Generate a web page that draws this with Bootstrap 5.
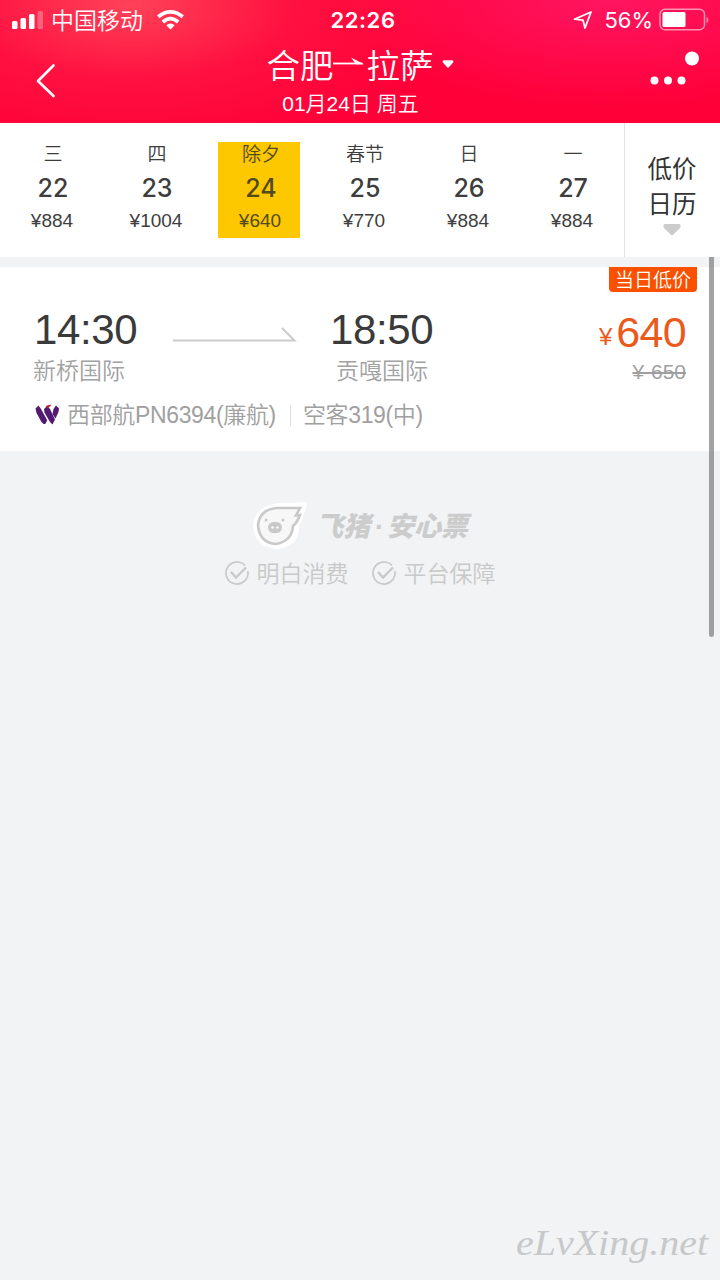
<!DOCTYPE html>
<html lang="zh-CN">
<head>
<meta charset="utf-8">
<meta name="viewport" content="width=device-width, initial-scale=1">
<title>合肥→拉萨</title>
<link href="https://cdn.jsdelivr.net/npm/bootstrap@5.3.0/dist/css/bootstrap.min.css" rel="stylesheet">
<style>
body{font-family:"Liberation Sans","Noto Sans CJK SC",sans-serif;background:#f1f3f5;color:#3d3d3d;height:1280px;overflow:hidden}
svg{display:block;flex:none;overflow:visible}
.cjk{font-family:"Noto Sans CJK SC",sans-serif;font-weight:350}
.sf{font-family:Inter,sans-serif}
.top-area{height:123px;color:#fff;background:radial-gradient(ellipse 330px 150px at 130px 5px,rgba(255,80,95,.82),rgba(255,40,75,.4) 50%,transparent),radial-gradient(ellipse 280px 110px at 610px 0,rgba(255,28,110,.75),transparent),#ff0038}
.status{height:40px}
.status>div{flex:1 1 0}
.carrier{font-size:23px;line-height:38px;height:40px;margin:0 14px 0 7px}
.clock{font-size:22px;line-height:40px;font-weight:600;letter-spacing:.6px;margin:0 -7px 0 15px}
.batt{font-size:22px;line-height:40px;margin:0 7px 0 12px}
.titlebar{height:83px}
.side{width:76px;height:83px}
.city{font-size:33.5px;line-height:50px;height:47px}
.subdate{font-size:21px;line-height:33px;height:33px;font-family:"Liberation Sans","Noto Sans CJK SC",sans-serif;font-weight:350;padding-right:19px}
.dates{height:134px;background:#fff}
.day{width:104px;padding-top:19px}
.tile{width:82px;height:96px;margin-left:10px;padding-left:4px}
.tile.on{background:#fdc800;color:#514a1c}
.wk{font-size:19px;line-height:22px;height:30px}
.dn{font-size:25px;line-height:32px;height:32px;font-weight:500}
.pr{font-size:19px;line-height:34px;height:34px;padding-right:2px}
.cal{width:96px;border-left:1px solid #e2e2e2;padding:27px 1px 0 0;font:400 24.5px/35px "Noto Sans CJK SC",sans-serif;color:#333}
.flight{height:184px;margin-top:10px;background:#fff;padding:0 34px 0 33px}
.tag-low{width:88px;height:25px;margin-right:-11px;border-radius:0 0 4px 4px;background:#fa5000;color:#fff;font-size:19px;line-height:24px}
.schedule{height:105px;padding-top:13px}
.leg-from{width:140px}
.leg-to{margin-left:33px}
.time{font-size:42px;line-height:50px;height:48px;letter-spacing:-.4px;color:#3a3a3a}
.leg-from .time{padding-left:1px}
.port{font-size:23px;line-height:33px;height:34px;color:#a2a2a2}
.leg-to .port{padding-left:6px}
.price{font-size:43px;line-height:50px;height:50px;color:#e95a1c;letter-spacing:-.7px;padding-top:2px}
.yen{font-size:24px;margin-right:4px;letter-spacing:0;vertical-align:2px;line-height:1}
.was{font-size:21px;line-height:34px;height:28px;color:#9f9f9f;word-spacing:1px}
.info{font-size:23px;line-height:36px;height:36px;color:#a0a0a0;letter-spacing:-.35px;font-weight:350}
.sep{width:1px;height:21px;background:#ddd;margin:0 12px 0 14px}
.brand{color:#ccc;font:italic 900 27px/44px "Noto Sans CJK SC",sans-serif;padding-top:2px}
.dot{font-family:"Liberation Sans",sans-serif;padding:0 4px}
.pledge{font-size:23px;line-height:38px;height:44px;color:#c9c9c9}
.pledge span{margin-bottom:2px}
.pledge-gap{margin-right:23px}
.scrollbar-thumb{right:6px;top:257px;width:5px;height:380px;border-radius:0 0 3px 3px;background:rgba(120,120,120,.68)}
.site-mark{right:9px;bottom:10px;color:#c6c8c9}
</style>
</head>
<body class="position-relative">
<header class="top-area">
  <div class="status d-flex align-items-center">
    <div class="d-flex align-items-center">
      <svg width="36" height="18" class="ms-2 ps-1" viewBox="0 0 32 18"><g fill="#fff"><rect x="0" y="10" width="5.500" height="8" rx="1.500"/><rect x="8.500" y="7" width="5.500" height="11" rx="1.500"/><rect x="17" y="3" width="5.500" height="15" rx="1.500"/><rect x="25.500" y="0" width="5.500" height="18" rx="1.500" opacity=".28"/></g></svg>
      <span class="carrier cjk">中国移动</span>
      <svg width="27" height="20" viewBox="0 0 27 20"><g fill="none" stroke="#fff" stroke-width="3.700"><path d="M1.300 6.800Q13.500-3 25.700 6.800"/><path d="M5.800 12Q13.500 5.300 21.200 12"/></g><path d="M9.300 15.300Q13.500 11.500 17.700 15.300L13.500 19.500Z" fill="#fff"/></svg>
    </div>
    <span class="clock sf">22:26</span>
    <div class="d-flex align-items-center justify-content-end pe-3">
      <svg width="18" height="18" viewBox="0 0 18 18"><path d="M.5 8.200 17 1 11 17 9 9.200Z" fill="none" stroke="#fff" stroke-width="1.800" stroke-linejoin="round"/></svg>
      <span class="batt sf">56%</span>
      <svg width="44" height="22" viewBox="0 0 44 22"><rect x="0" y=".3" width="44.500" height="20.400" rx="5" fill="none" stroke="#fff" stroke-opacity=".55" stroke-width="1.500"/><rect x="2.500" y="3" width="23" height="15" rx="1.500" fill="#fff"/><path d="M46.500 7.500q4 3.500 0 7Z" fill="#fff" opacity=".5"/></svg>
    </div>
  </div>
  <div class="titlebar d-flex justify-content-between">
    <svg class="side" viewBox="0 0 76 83"><path d="M53.500 25.500 38 41 53.500 56" fill="none" stroke="#fff" stroke-width="2.600" stroke-linecap="round" stroke-linejoin="round"/></svg>
    <div class="d-flex flex-column align-items-center">
      <div class="city cjk d-flex align-items-center">合肥<svg width="33" height="34" viewBox="0 0 33 34"><path d="M-1 16.500H28.500" fill="none" stroke="#fff" stroke-width="1.800"/><path d="M17 10.500 30 17.300H22Z" fill="#fff"/></svg>拉萨<svg class="ms-2" width="12" height="10" viewBox="0 0 13 10"><path d="M1.500 1H11.500Q13 1.500 12 3.500L7.500 8.500Q6.500 9.500 5.500 8.500L1 3.500Q0 1.500 1.500 1Z" fill="#fff"/></svg></div>
      <div class="subdate">01月24日 周五</div>
    </div>
    <svg class="side" viewBox="0 0 76 83"><g fill="#fff"><circle cx="10.500" cy="40.500" r="4"/><circle cx="24" cy="40.500" r="4"/><circle cx="37.500" cy="40.500" r="4"/><circle cx="48" cy="18.500" r="7"/></g></svg>
  </div>
</header>
<nav class="dates d-flex">
  <div class="day"><div class="tile text-center"><div class="wk cjk">三</div><div class="dn sf">22</div><div class="pr">¥884</div></div></div>
  <div class="day"><div class="tile text-center"><div class="wk cjk">四</div><div class="dn sf">23</div><div class="pr">¥1004</div></div></div>
  <div class="day"><div class="tile on text-center"><div class="wk cjk">除夕</div><div class="dn sf">24</div><div class="pr">¥640</div></div></div>
  <div class="day"><div class="tile text-center"><div class="wk cjk">春节</div><div class="dn sf">25</div><div class="pr">¥770</div></div></div>
  <div class="day"><div class="tile text-center"><div class="wk cjk">日</div><div class="dn sf">26</div><div class="pr">¥884</div></div></div>
  <div class="day"><div class="tile text-center"><div class="wk cjk">一</div><div class="dn sf">27</div><div class="pr">¥884</div></div></div>
  <div class="cal d-flex flex-column align-items-center"><span>低价</span><span>日历</span><svg class="mt-1" width="18" height="12" viewBox="0 0 18 12"><path d="M1.500 0H16.500Q18.500 1 17 4L10.500 10.500Q9 12 7.500 10.500L1 4Q-.5 1 1.500 0Z" fill="#ccc"/></svg></div>
</nav>
<main>
  <section class="flight">
    <div class="d-flex justify-content-end"><span class="tag-low cjk text-center">当日低价</span></div>
    <div class="schedule d-flex">
      <div class="leg-from"><div class="time">14:30</div><div class="port cjk">新桥国际</div></div>
      <svg class="mt-2 pt-1" width="124" height="38" viewBox="0 0 124 34"><path d="M0 23.500H121.500L109 11" fill="none" stroke="#ccc" stroke-width="2"/></svg>
      <div class="leg-to"><div class="time">18:50</div><div class="port cjk">贡嘎国际</div></div>
      <div class="ms-auto text-end"><div class="price"><span class="yen">¥</span>640</div><div class="was text-decoration-line-through">¥ 650</div></div>
    </div>
    <div class="info d-flex align-items-center">
      <svg width="26" height="22" class="me-2" viewBox="0 0 26 22"><g fill="#521a72"><path d="M2.500 4.500 5.500 1.500 8 5 14 16 10.500 20 8.500 18 3.500 9Z"/><path d="M11 5 14.500 2 17 5 22 15.500 19.500 20.500 17 18 11.500 8.500Z"/><path d="M20.500 5 23 1.500 26 4.500 25.500 8 22.500 14.500 19.500 10Z"/><path d="M12 13.500 14 17 12.200 20 10.500 20Z"/></g><path d="M12.500 3.500Q13 .5 18.500 .8L16 3.500Z" fill="#bd2430"/></svg>
      <span>西部航PN6394(廉航)</span><span class="sep"></span><span>空客319(中)</span>
    </div>
  </section>
  <section class="d-flex flex-column align-items-center pt-5">
    <div class="brand d-flex align-items-center">
      <svg width="56" height="50" class="me-2" viewBox="0 0 56 50"><path d="M27 2Q40 2 55 1Q54 9 51 14Q52 18 47 24Q48 46 25 48Q4 47 1 25Q2 5 27 2Z" fill="#fff"/><path d="M24 7H48L44 14.500L48 14Q45 22 41 25Q40 40 24 43Q8 42 6 25Q7 9 24 7Z" fill="#f7f7f7" stroke="#c9c9c9" stroke-width="2.600"/><rect x="16" y="21" width="14" height="11" rx="5.500" fill="#c9c9c9"/><g fill="#c9c9c9"><circle cx="14" cy="19" r="1.500"/><circle cx="31" cy="19" r="1.500"/></g><g fill="#fff"><circle cx="20.500" cy="26.500" r="1.200"/><circle cx="25.500" cy="26.500" r="1.200"/></g></svg>
      <span>飞猪<span class="dot">·</span>安心票</span>
    </div>
    <div class="pledge cjk d-flex align-items-center">
      <svg width="24" height="24" class="me-2" viewBox="0 0 24 24"><g fill="none" stroke="#c9c9c9" stroke-width="1.700"><path d="M20 4.500A11 11 0 1 0 22.800 10"/><path d="M6 11 11 16.500 21 6.500" stroke-width="2.400"/></g></svg><span class="pledge-gap">明白消费</span>
      <svg width="24" height="24" class="me-2" viewBox="0 0 24 24"><g fill="none" stroke="#c9c9c9" stroke-width="1.700"><path d="M20 4.500A11 11 0 1 0 22.800 10"/><path d="M6 11 11 16.500 21 6.500" stroke-width="2.400"/></g></svg><span>平台保障</span>
    </div>
  </section>
</main>
<div class="scrollbar-thumb position-absolute"></div>
<svg class="site-mark position-absolute" width="196" height="50" viewBox="0 0 196 50"><text x="1" y="35" font-family="Liberation Serif, serif" font-style="italic" font-size="35" fill="currentColor" textLength="192" lengthAdjust="spacingAndGlyphs">eLvXing.net</text></svg>
<script src="https://cdn.jsdelivr.net/npm/bootstrap@5.3.0/dist/js/bootstrap.bundle.min.js"></script>
</body>
</html>
